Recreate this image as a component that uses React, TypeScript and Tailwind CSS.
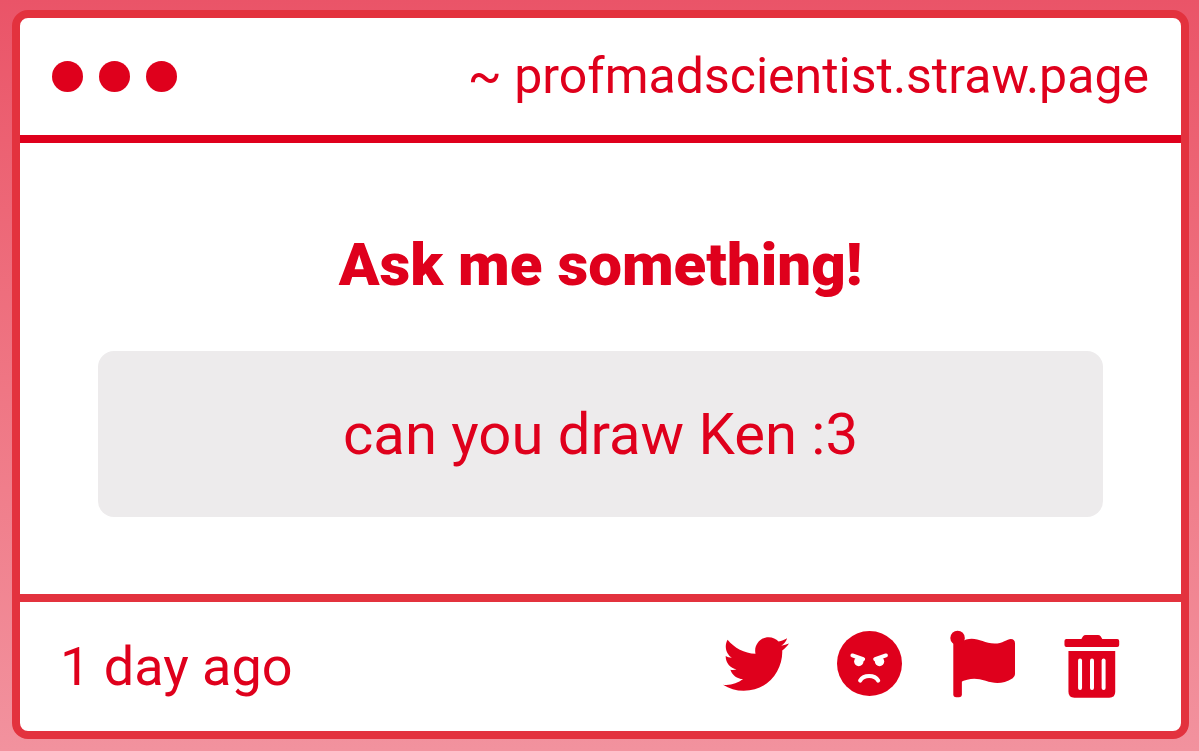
import type { ReactNode } from "react";
import { FaTwitter } from "react-icons/fa";

function AngryIcon() {
  return (
    <svg viewBox="0 0 194 194" className="size-[65px]" fill="none" aria-hidden="true">
      <circle cx="97" cy="97" r="97" fill="currentColor" />
      <g fill="white">
        <circle cx="65" cy="91" r="14" />
        <circle cx="127" cy="91" r="14" />
      </g>
      <g stroke="white" strokeWidth="12" strokeLinecap="round">
        <path d="M46 73 L78 84" />
        <path d="M146 73 L114 84" />
        <path d="M69 148 C80 130 112 130 123 148" />
      </g>
    </svg>
  );
}

function FlagIcon() {
  return (
    <svg viewBox="0 0 200 204" className="h-17 w-[66px]" fill="currentColor" aria-hidden="true">
      <circle cx="23" cy="23" r="22" />
      <rect x="10" y="23" width="26" height="180" rx="9" />
      <path d="M30 36 C75 10 95 39 135 40 C159 40 174 26 184 26 Q197 26 197 40 V132 Q197 140 190 145 C160 164 135 162 108 153 C78 143 57 145 30 158 Z" />
    </svg>
  );
}

function TrashIcon() {
  return (
    <svg viewBox="0 -18 168 208" className="h-[69px] w-14" aria-hidden="true">
      <path
        fill="currentColor"
        d="M7 12 H52 L57 4 Q60 0 65 0 H102 Q107 0 110 4 L115 12 H160 Q166 12 166 18 V30 Q166 36 160 36 H7 Q1 36 1 30 V18 Q1 12 7 12 Z"
      />
      <path fill="currentColor" d="M13 48 H154 V171 Q154 189 136 189 H31 Q13 189 13 171 Z" />
      <g stroke="white" strokeWidth="12" strokeLinecap="round">
        <path d="M48 77 V160" />
        <path d="M84 77 V160" />
        <path d="M119 77 V160" />
      </g>
    </svg>
  );
}

function IconButton({ label, children }: { label: string; children: ReactNode }) {
  return (
    <button type="button" aria-label={label} className="flex cursor-pointer items-center justify-center">
      {children}
    </button>
  );
}

export default function App() {
  return (
    <div className="flex min-h-screen flex-col bg-linear-to-b from-[#ea5468] to-[#f2929e] pt-2.5 pr-2.5 pb-3 pl-3 font-[Roboto,sans-serif] text-[#df001c]">
      <main className="flex flex-1 flex-col rounded-2xl border-8 border-[#e3323e] bg-white">
        <header className="flex items-center justify-between border-b-8 border-[#df001c] px-8 py-6">
          <div className="flex gap-4">
            <span className="size-[31px] rounded-full bg-[#df001c]" />
            <span className="size-[31px] rounded-full bg-[#df001c]" />
            <span className="size-[31px] rounded-full bg-[#df001c]" />
          </div>
          <a href="#" className="text-[50px] leading-[69px]">
            ~ profmadscientist.straw.page
          </a>
        </header>

        <section className="flex flex-1 flex-col items-center justify-center gap-[50px] px-[78px] pt-2 text-center">
          <h1 className="text-[60px] leading-[72px] font-black">Ask me something!</h1>
          <p className="w-full rounded-2xl bg-[#edebec] py-12 text-[58px] leading-[70px]">can you draw Ken :3</p>
        </section>

        <footer className="flex items-center justify-between border-t-8 border-[#e3323e] py-[27px] pr-[61px] pl-10">
          <time className="text-[54px] leading-[73px]">1 day ago</time>
          <div className="flex items-center gap-12 pb-1.5">
            <IconButton label="Share on Twitter">
              <FaTwitter className="size-[66px]" />
            </IconButton>
            <IconButton label="Block sender">
              <AngryIcon />
            </IconButton>
            <IconButton label="Report">
              <FlagIcon />
            </IconButton>
            <IconButton label="Delete">
              <TrashIcon />
            </IconButton>
          </div>
        </footer>
      </main>
    </div>
  );
}
